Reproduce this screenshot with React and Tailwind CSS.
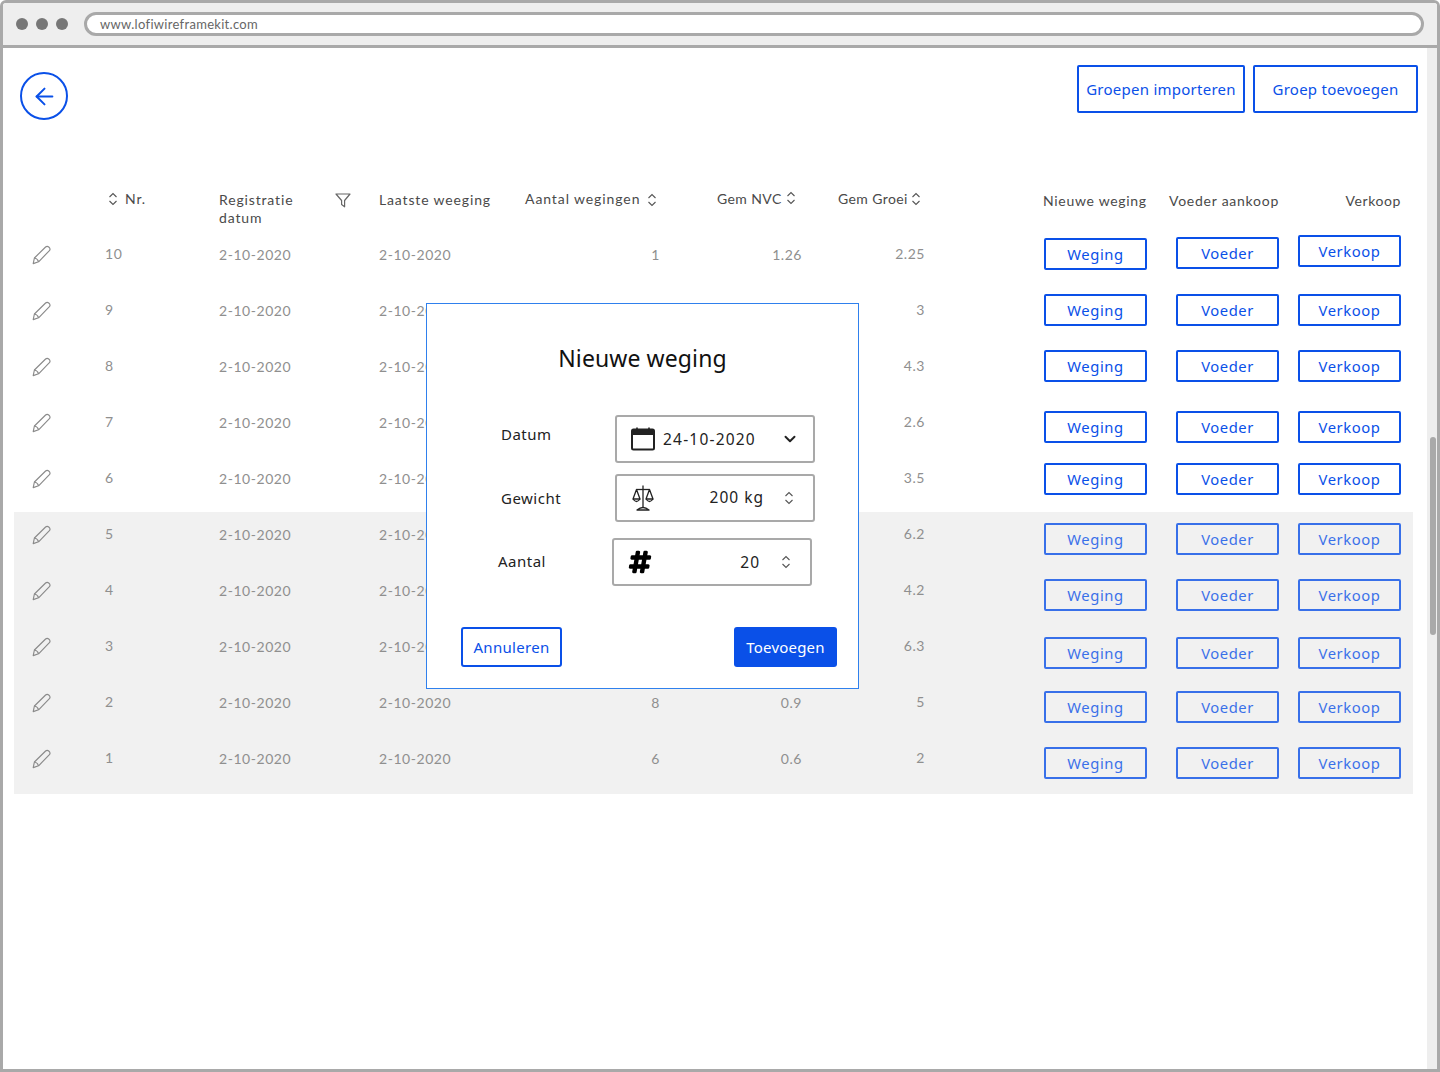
import { ArrowLeft, ChevronDown } from 'lucide-react';
import { FaHashtag } from 'react-icons/fa';

const rows = [
  { nr: 10, a: '1', nvc: '1.26', groei: '2.25', w: 'mt-[6px]', v: 'mt-[5px]', k: 'mt-[3px]' },
  { nr: 9, a: '', nvc: '', groei: '3', w: 'mt-[6px]', v: 'mt-[6px]', k: 'mt-[6px]' },
  { nr: 8, a: '', nvc: '', groei: '4.3', w: 'mt-[6px]', v: 'mt-[6px]', k: 'mt-[6px]' },
  { nr: 7, a: '', nvc: '', groei: '2.6', w: 'mt-[11px]', v: 'mt-[11px]', k: 'mt-[11px]' },
  { nr: 6, a: '', nvc: '', groei: '3.5', w: 'mt-[7px]', v: 'mt-[7px]', k: 'mt-[7px]' },
  { nr: 5, a: '', nvc: '', groei: '6.2', w: 'mt-[11px]', v: 'mt-[11px]', k: 'mt-[11px]', gray: true },
  { nr: 4, a: '', nvc: '', groei: '4.2', w: 'mt-[11px]', v: 'mt-[11px]', k: 'mt-[11px]', gray: true },
  { nr: 3, a: '', nvc: '', groei: '6.3', w: 'mt-[13px]', v: 'mt-[13px]', k: 'mt-[13px]', gray: true },
  { nr: 2, a: '8', nvc: '0.9', groei: '5', w: 'mt-[11px]', v: 'mt-[11px]', k: 'mt-[11px]', gray: true },
  { nr: 1, a: '6', nvc: '0.6', groei: '2', w: 'mt-[11px]', v: 'mt-[11px]', k: 'mt-[11px]', gray: true },
];

const Sort = ({ className = 'text-[#555]' }) => (
  <svg width="10" height="14" viewBox="0 0 10 14" fill="none" stroke="currentColor" strokeWidth="1.1" className={className}>
    <path d="M1.5 5 L5 1.5 L8.5 5" />
    <path d="M1.5 9 L5 12.5 L8.5 9" />
  </svg>
);

const Pencil = () => (
  <svg width="20" height="20" viewBox="0 0 20 20" fill="none" stroke="#8a8a8a" strokeWidth="1.15" strokeLinejoin="round">
    <path d="M1.2 18.6 L2.4 13 L13.6 2 Q15.2 0.6 17 2.2 Q18.8 4 17.4 5.6 L6.6 16.8 Z" />
    <path d="M2.4 13 Q5.6 13.6 6.6 16.8" />
  </svg>
);

const Funnel = () => (
  <svg width="16" height="15" viewBox="0 0 16 15" fill="none" stroke="#666" strokeWidth="1.2" strokeLinejoin="round">
    <path d="M1 1 H15 L9.6 7.5 V13.8 L6.6 11.6 V7.5 Z" />
  </svg>
);

const CalendarIcon = () => (
  <svg width="24" height="24" viewBox="0 0 24 24" fill="none">
    <rect x="1" y="2.5" width="22" height="20" rx="1.5" stroke="#222" strokeWidth="2" />
    <rect x="1" y="2.5" width="22" height="5.5" fill="#222" />
    <path d="M6 0.5 V4 M18 0.5 V4" stroke="#222" strokeWidth="1.6" />
  </svg>
);

const ScaleIcon = () => (
  <svg width="22" height="26" viewBox="0 0 22 26" fill="none" stroke="#222" strokeWidth="1.3" strokeLinejoin="round" className="ml-[15px]">
    <path d="M11 0.5 V22.5" />
    <path d="M4.5 4.5 H17.5" />
    <path d="M4.5 4.5 L1 14 H8 Z" />
    <path d="M1 14 Q4.5 19 8 14" />
    <path d="M17.5 4.5 L14 14 H21 Z" />
    <path d="M14 14 Q17.5 19 21 14" />
    <path d="M5 25 Q11 20 17 25 Z" />
  </svg>
);

const RowButton = ({ label, className }) => (
  <button className={`w-[103px] h-[32px] flex items-center justify-center border-[2px] border-[#0a50e8] rounded-[2px] text-[#0a50e8] text-[14.8px] font-['Noto_Sans',sans-serif] ${className}`}>
    {label}
  </button>
);

const TableRow = ({ row }) => (
  <div className={`flex h-[56px] items-start text-[14px] leading-5 tracking-[0.55px] text-[#8f8f8f] ${row.gray ? 'bg-[#f1f1f1]' : ''}`}>
    <div className="w-[91px] pl-[18px] mt-[13px]"><Pencil /></div>
    <div className="w-[114px] mt-[12px]">{row.nr}</div>
    <div className="w-[160px] mt-[13px]">2-10-2020</div>
    <div className="w-[146px] mt-[13px]">2-10-2020</div>
    <div className="w-[135px] mt-[13px] text-right">{row.a}</div>
    <div className="w-[142px] mt-[13px] text-right">{row.nvc}</div>
    <div className="w-[123px] mt-[12px] text-right">{row.groei}</div>
    <div className={`flex ml-[119px] ${row.gray ? 'opacity-80' : ''}`}>
      <RowButton label="Weging" className={row.w} />
      <RowButton label="Voeder" className={`ml-[29px] ${row.v}`} />
      <RowButton label="Verkoop" className={`ml-[19px] ${row.k}`} />
    </div>
  </div>
);

const Field = ({ label, children, className = '', labelClass = '' }) => (
  <div className={`flex items-center ${className}`}>
    <span className={`text-[15px] tracking-[0.5px] text-[#222] ${labelClass}`}>{label}</span>
    <div className="w-[200px] h-[48px] flex items-center border-[2px] border-[#a9a9a9] rounded-[3px] bg-white text-[15.5px] tracking-[1px] text-[#222]">
      {children}
    </div>
  </div>
);

const Modal = () => (
  <div className="absolute left-[423px] top-[255px] w-[433px] h-[386px] bg-white border border-[#2f80ed] font-['Noto_Sans',sans-serif]">
    <h2 className="mt-[38px] text-center text-[23px] tracking-[0.1px] leading-8 text-[#111]">Nieuwe weging</h2>
    <div className="mt-[41px] flex flex-col">
      <Field label="Datum" className="pl-[74px]" labelClass="w-[114px] -mt-[10px]">
        <span className="ml-[14px]"><CalendarIcon /></span>
        <span className="ml-[8px] pt-[1px] flex-1 tracking-[1.2px]">24-10-2020</span>
        <ChevronDown size={18} strokeWidth={2.6} className="mr-[14px] text-[#222]" />
      </Field>
      <Field label="Gewicht" className="pl-[74px] mt-[11px]" labelClass="w-[114px]">
        <ScaleIcon />
        <span className="flex-1 text-right mr-[20px]">200 kg</span>
        <Sort className="mr-[19px] text-[#555]" />
      </Field>
      <Field label="Aantal" className="pl-[71px] mt-[16px]" labelClass="w-[114px] -mt-[2px]">
        <FaHashtag size={24} stroke="currentColor" strokeWidth={30} className="ml-[14px] text-black" />
        <span className="flex-1 pt-[1px] text-right mr-[21px]">20</span>
        <Sort className="mr-[19px] text-[#555]" />
      </Field>
    </div>
    <div className="mt-[41px] flex justify-between pl-[34px] pr-[21px]">
      <button className="w-[101px] h-[40px] border-[2px] border-[#0a50e8] rounded-[3px] text-[#0a50e8] text-[15px] tracking-[0.3px]">Annuleren</button>
      <button className="w-[103px] h-[40px] bg-[#0a50e8] rounded-[3px] text-white text-[15px] tracking-[0.2px]">Toevoegen</button>
    </div>
  </div>
);

export default function App() {
  return (
    <div className="w-[1440px] h-[1072px] flex flex-col border-[3px] border-[#a9a9a9] rounded-t-[6px] bg-white font-['Lato',sans-serif] overflow-hidden">
      {/* Browser bar */}
      <div className="h-[45px] shrink-0 flex items-center bg-[#eeeeee] border-b-[3px] border-[#a9a9a9] pl-[13px] pr-[13px]">
        <div className="flex gap-[8px]">
          <span className="w-[12px] h-[12px] rounded-full bg-[#777]" />
          <span className="w-[12px] h-[12px] rounded-full bg-[#777]" />
          <span className="w-[12px] h-[12px] rounded-full bg-[#777]" />
        </div>
        <div className="ml-[16px] flex-1 h-[24px] flex items-center pl-[13px] pt-[1px] rounded-full border-[3px] border-[#a9a9a9] bg-white text-[13px] tracking-[0.3px] text-[#666]">
          www.lofiwireframekit.com
        </div>
      </div>

      <div className="flex flex-1 min-h-0">
        <main className="relative w-[1424px]">
          {/* Top actions */}
          <div className="flex justify-between items-start pt-[17px] pl-[17px] pr-[9px]">
            <button className="mt-[7px] w-[48px] h-[48px] flex items-center justify-center rounded-full border-[2px] border-[#0a50e8] text-[#0a50e8]">
              <ArrowLeft size={27} strokeWidth={1.8} />
            </button>
            <div className="flex gap-[8px] text-[15px] tracking-[0.25px] text-[#0a50e8] font-['Noto_Sans',sans-serif]">
              <button className="w-[168px] h-[48px] border-[2px] border-[#0a50e8] rounded-[2px]">Groepen importeren</button>
              <button className="w-[165px] h-[48px] border-[2px] border-[#0a50e8] rounded-[2px]">Groep toevoegen</button>
            </div>
          </div>

          <div className="ml-[11px] w-[1399px] mt-[70px]">
            {/* Table header */}
            <div className="h-[42px] flex items-start text-[14px] leading-[18px] tracking-[0.85px] text-[#4a4a4a]">
              <div className="w-[94px]" />
              <div className="w-[111px] flex items-start gap-[7px]"><Sort className="mt-[2px] text-[#555]" /><span>Nr.</span></div>
              <div className="w-[116px] mt-[1px]">Registratie<br />datum</div>
              <div className="w-[44px] pt-[3px]"><Funnel /></div>
              <div className="w-[146px] mt-[1px]">Laatste weeging</div>
              <div className="w-[192px] flex items-start gap-[7px] tracking-[0.9px]"><span>Aantal wegingen</span><Sort className="mt-[3px] text-[#555]" /></div>
              <div className="w-[121px] flex items-start gap-[4px] tracking-[0.4px]"><span>Gem NVC</span><Sort className="mt-[1px] text-[#555]" /></div>
              <div className="w-[205px] flex items-start gap-[3px] tracking-[0.4px]"><span>Gem Groei</span><Sort className="mt-[2px] text-[#555]" /></div>
              <div className="w-[126px] mt-[2px] whitespace-nowrap tracking-[0.7px]">Nieuwe weging</div>
              <div className="w-[110px] mt-[2px] whitespace-nowrap tracking-[0.75px]">Voeder aankoop</div>
              <div className="w-[122px] mt-[2px] text-right tracking-[0.6px]">Verkoop</div>
            </div>
            {rows.map((row) => <TableRow key={row.nr} row={row} />)}
            <div className="h-[2px] bg-[#f1f1f1]" />
          </div>

          <Modal />
        </main>

        {/* Scrollbar */}
        <div className="w-[10px] ml-auto bg-[#eeeeee] pt-[389px] pl-[3px]">
          <div className="w-[6px] h-[198px] rounded-full bg-[#a9a9a9]" />
        </div>
      </div>
    </div>
  );
}
